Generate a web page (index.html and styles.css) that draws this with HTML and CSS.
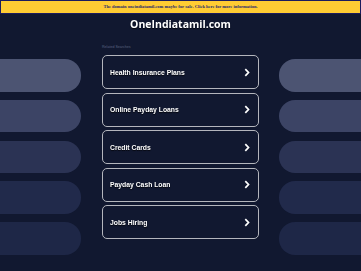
FILE: index.html
```html
<!DOCTYPE html>
<html lang="en">
<head>
<meta charset="utf-8">
<title>OneIndiatamil.com</title>
<link rel="stylesheet" href="styles.css">
</head>
<body>
<div class="banner">The domain oneindiatamil.com maybe for sale. Click here for more information.</div>
<h1 class="title">OneIndiatamil.com</h1>
<div class="row">
  <div class="side side-left">
    <div class="pill p1"></div>
    <div class="pill p2"></div>
    <div class="pill p3"></div>
    <div class="pill p4"></div>
    <div class="pill p5"></div>
  </div>
  <div class="center">
    <div class="label">Related Searches</div>
    <div class="cards">
      <div class="card"><span>Health Insurance Plans</span><svg class="chev" viewBox="0 0 6 9" width="6" height="9"><path d="M1.3 1.2 L4.5 4.5 L1.3 7.8" fill="none" stroke="#fff" stroke-width="1.7"/></svg></div>
      <div class="card"><span>Online Payday Loans</span><svg class="chev" viewBox="0 0 6 9" width="6" height="9"><path d="M1.3 1.2 L4.5 4.5 L1.3 7.8" fill="none" stroke="#fff" stroke-width="1.7"/></svg></div>
      <div class="card"><span>Credit Cards</span><svg class="chev" viewBox="0 0 6 9" width="6" height="9"><path d="M1.3 1.2 L4.5 4.5 L1.3 7.8" fill="none" stroke="#fff" stroke-width="1.7"/></svg></div>
      <div class="card"><span>Payday Cash Loan</span><svg class="chev" viewBox="0 0 6 9" width="6" height="9"><path d="M1.3 1.2 L4.5 4.5 L1.3 7.8" fill="none" stroke="#fff" stroke-width="1.7"/></svg></div>
      <div class="card"><span>Jobs Hiring</span><svg class="chev" viewBox="0 0 6 9" width="6" height="9"><path d="M1.3 1.2 L4.5 4.5 L1.3 7.8" fill="none" stroke="#fff" stroke-width="1.7"/></svg></div>
    </div>
  </div>
  <div class="side side-right">
    <div class="pill p1"></div>
    <div class="pill p2"></div>
    <div class="pill p3"></div>
    <div class="pill p4"></div>
    <div class="pill p5"></div>
  </div>
</div>
</body>
</html>
```
FILE: styles.css
```css
html, body {
  margin: 0;
  padding: 0;
  background: #111830;
  overflow: hidden;
  height: 100%;
}
body {
  font-family: "Liberation Sans", Arial, sans-serif;
}
.banner {
  height: 12px;
  border: 1px solid #1c1c5e;
  background: #ffcc33;
  color: #1f2a6e;
  font-family: "Liberation Serif", "Times New Roman", serif;
  font-weight: bold;
  font-size: 4.5px;
  line-height: 12px;
  text-align: center;
}
.title {
  margin: 3px 0 0;
  height: 14px;
  line-height: 14px;
  text-align: center;
  color: #fff;
  font-family: "Open Sans", sans-serif;
  font-weight: 700;
  font-size: 10.5px;
  text-shadow: 0 1px 1px rgba(0, 0, 0, 0.7);
  will-change: transform;
}
.row {
  margin-top: 13px;
  display: grid;
  grid-template-columns: 81px 157px 82px;
  column-gap: 21px;
}
.side {
  padding-top: 15px;
  display: flex;
  flex-direction: column;
  gap: 8.25px;
}
.side-right {
  margin-left: -1px;
}
.pill {
  height: 32.5px;
}
.side-left .pill {
  border-radius: 0 16px 16px 0;
}
.side-right .pill {
  border-radius: 16px 0 0 16px;
}
.p1 { background: #4c5472; }
.p2 { background: #3c4465; }
.p3 { background: #2b3354; }
.p4 { background: #212a4b; }
.p5 { background: #1e2747; }
.label {
  height: 6px;
  line-height: 6px;
  font-size: 3.6px;
  color: #5a6480;
  margin-bottom: 5px;
}
.cards {
  display: flex;
  flex-direction: column;
  gap: 3.5px;
  will-change: transform;
}
.card {
  box-sizing: border-box;
  height: 34px;
  border: 1.5px solid #b4b6bd;
  border-radius: 5px;
  display: flex;
  align-items: center;
  justify-content: space-between;
  padding: 0 8px 0 7px;
  color: #fff;
  font-weight: bold;
  font-size: 6.8px;
  text-shadow: 0 1px 1px rgba(0, 0, 0, 0.8);
}
.chev {
  display: block;
}
```
